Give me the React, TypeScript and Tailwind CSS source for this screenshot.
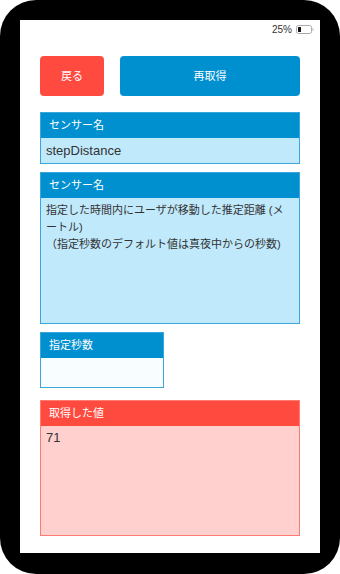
const jp = { fontFamily: '"Liberation Sans", "Noto Sans CJK JP", sans-serif' };

function Battery() {
  return (
    <svg width="18" height="9" viewBox="0 0 18 9" className="ml-[4px]">
      <rect x="0.5" y="0.5" width="15" height="8" rx="2" fill="none" stroke="#aaa" />
      <rect x="2" y="2" width="3" height="5" rx="0.5" fill="#111" />
      <rect x="16.3" y="3" width="1.2" height="3" fill="#ccc" />
    </svg>
  );
}

function Panel({
  title,
  tone = 'blue',
  className = '',
  bodyClass = '',
  children,
}: {
  title: string;
  tone?: 'blue' | 'red';
  className?: string;
  bodyClass?: string;
  children?: React.ReactNode;
}) {
  const isRed = tone === 'red';
  return (
    <div
      className={`flex flex-col border ${isRed ? 'border-[#ff7a70]' : 'border-[#3aa6dc]'} ${className}`}
    >
      <div
        className={`h-[25px] shrink-0 flex items-center px-[8px] text-[11px] text-white ${isRed ? 'bg-[#ff4a40]' : 'bg-[#0090d0]'}`}
      >
        {title}
      </div>
      <div
        className={`flex-1 px-[5px] text-[11px] text-[#333] ${isRed ? 'bg-[#ffd0cd]' : 'bg-[#c0e9fb]'} ${bodyClass}`}
      >
        {children}
      </div>
    </div>
  );
}

export default function App() {
  return (
    <div className="w-[340px] h-[574px] bg-white" style={jp}>
      <div className="w-full h-full bg-black rounded-[36px] p-5 pb-[21px]">
        <div className="w-full h-full bg-white flex flex-col px-5">
          {/* status bar */}
          <div className="h-[16px] mt-[1px] flex items-center justify-end -mr-[14px] text-[10px] text-[#333]">
            25%
            <Battery />
          </div>

          {/* buttons */}
          <div className="mt-[19px] flex gap-4">
            <button className="w-[64px] h-[40px] rounded-[4px] bg-[#ff4a40] text-white text-[11px]">
              戻る
            </button>
            <button className="flex-1 h-[40px] rounded-[4px] bg-[#0090d0] text-white text-[11px]">
              再取得
            </button>
          </div>

          <Panel title="センサー名" className="mt-4 h-[52px]" bodyClass="flex items-center text-[13px]">
            stepDistance
          </Panel>

          <Panel title="センサー名" className="mt-2 h-[152px]" bodyClass="pt-[4px] leading-[17px]">
            指定した時間内にユーザが移動した推定距離 (メートル)
            <br />
            （指定秒数のデフォルト値は真夜中からの秒数)
          </Panel>

          <Panel title="指定秒数" className="mt-2 w-[124px] h-[56px]" bodyClass="!bg-[#f8fdff]" />

          <Panel title="取得した値" tone="red" className="mt-3 h-[136px]" bodyClass="pt-[3px] leading-[17px] text-[13px]">
            71
          </Panel>
        </div>
      </div>
    </div>
  );
}
